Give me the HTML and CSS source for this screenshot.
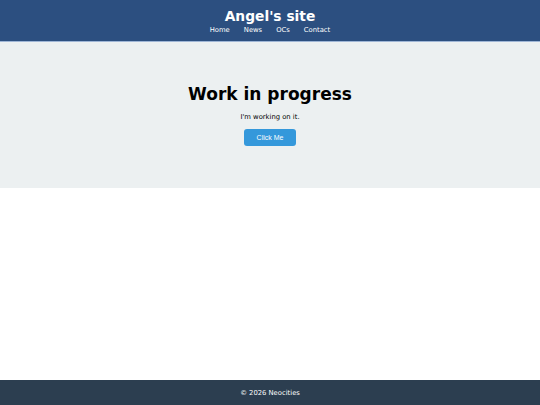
FILE: index.html
```html
<!DOCTYPE html>
<html lang="en">
<head>
    <meta charset="UTF-8">
    <meta name="viewport" content="width=device-width, initial-scale=1.0">
    <title>Angel's site</title>
    <link rel="stylesheet" href="styles.css">
</head>
<body>
    <header class="site-header">
        <h1>Angel's site</h1>
        <nav class="site-nav">
            <a href="#">Home</a>
            <a href="#">News</a>
            <a href="#">OCs</a>
            <a href="#">Contact</a>
        </nav>
    </header>

    <main class="content">
        <section class="hero">
            <h2>Work in progress</h2>
            <p>I'm working on it.</p>
            <button class="hero-button">Click Me</button>
        </section>
    </main>

    <footer class="site-footer">
        <p>&copy; 2026 Neocities</p>
    </footer>
</body>
</html>
```

FILE: styles.css
```css
body {
    margin: 0;
    font-family: 'DejaVu Sans', Verdana, sans-serif;
    min-height: 100vh;
    display: flex;
    flex-direction: column;
    background-color: #fff;
    color: #000;
}

.site-header {
    background-color: #2c4f80;
    color: white;
    text-align: center;
    padding: 8px 0 6px;
    border-bottom: 1px solid #9fb6d6;
}

.site-header h1 {
    margin: 0;
    font-size: 13.8px;
    line-height: 17px;
}

.site-nav {
    display: flex;
    justify-content: center;
    gap: 14px;
    margin-top: 1px;
}

.site-nav a {
    color: white;
    text-decoration: none;
    font-size: 6.8px;
    line-height: 9px;
}

.content {
    flex: 1;
}

.hero {
    background-color: #ecf0f1;
    text-align: center;
    padding: 41px 20px 42px;
}

.hero h2 {
    margin: 0;
    font-size: 17px;
    line-height: 22px;
}

.hero p {
    margin: 8px 0 7px;
    font-size: 6.8px;
    line-height: 9px;
}

.hero-button {
    display: block;
    margin: 0 auto;
    font-family: 'Liberation Sans', Arial, sans-serif;
    font-size: 7px;
    color: white;
    background-color: #3498db;
    border: none;
    border-radius: 3px;
    width: 52px;
    height: 17px;
    padding: 0;
    cursor: pointer;
}

.site-footer {
    background-color: #2c3e50;
    color: white;
    text-align: center;
    height: 25px;
    display: flex;
    align-items: center;
    justify-content: center;
}

.site-footer p {
    margin: 0;
    font-size: 6.8px;
}
```
